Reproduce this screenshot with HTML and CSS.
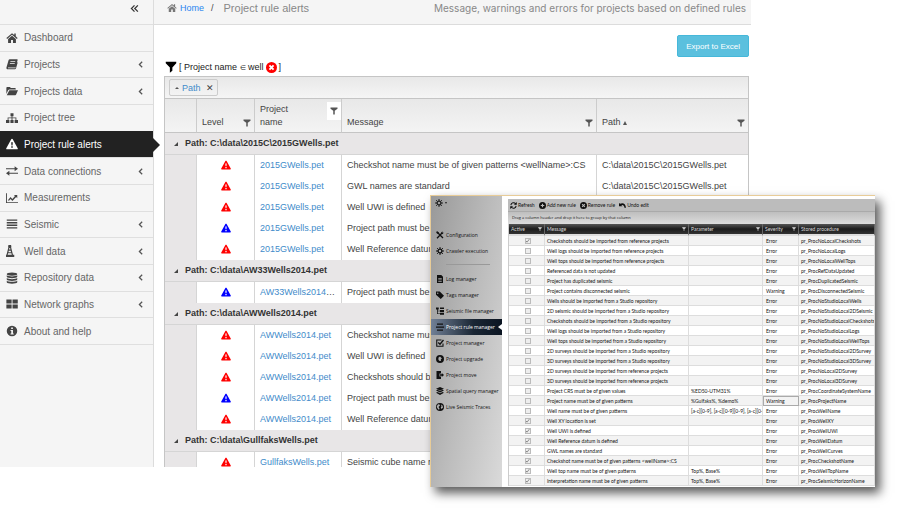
FILE: index.html
```html
<!DOCTYPE html>
<html lang="en">
<head>
    <meta charset="UTF-8">
    <meta name="viewport" content="width=device-width, initial-scale=1.0">
    <title>Project rule alerts</title>
    <link rel="stylesheet" href="styles.css">
</head>
<body>
    <svg class="sprite" aria-hidden="true">
        <symbol id="i-home" viewBox="0 0 16 16"><path d="M8 1.500L.5 8l1 1.200L8 3.700l6.500 5.500 1-1.200L13 5.800V2h-2v2.100z"/><path d="M8 5L2.800 9.300V14.500H6.700V10.500H9.300V14.500H13.200V9.300z"/></symbol>
        <symbol id="i-book" viewBox="0 0 16 16"><path d="M5 1.500h9.500c.8 0 1.200.6 1 1.300L13 11.500c-.2.700-.7 1-1.400 1H3.200c-.8 0-.8 1 0 1h9.200l2.300-8 .9.500-2.300 8c-.2.700-.8 1-1.400 1H2.500C1 15 .2 13.800.6 12.500L3.500 2.700C3.700 2 4.200 1.500 5 1.500zM6 4l-.3 1h6.500l.3-1zM5.300 6.500l-.3 1h6.500l.3-1z" fill-rule="evenodd"/></symbol>
        <symbol id="i-folder" viewBox="0 0 16 16"><path d="M.5 12V3.500c0-.6.400-1 1-1h3.700l1.300 1.500h5.500c.6 0 1 .4 1 1V6H4.500c-.7 0-1.300.4-1.700 1z"/><path d="M4.500 7H16l-2.500 5.700c-.2.500-.7.800-1.200.8H1z"/></symbol>
        <symbol id="i-tree" viewBox="0 0 16 16"><path d="M6 1.500h4v4H8.600v1.800h5.200v3.200H16v4h-4.500v-4h1.200V8.400H8.600v2.100h1.500v4H5.900v-4h1.500V8.400H3.300v2.100h1.200v4H0v-4h2.200V7.300h5.200V5.500H6z"/></symbol>
        <symbol id="i-alert" viewBox="0 0 16 16"><path d="M8 1c.5 0 .8.300 1 .600l6.600 12c.5.900-.1 1.400-.9 1.400H1.300c-.8 0-1.400-.5-.9-1.400l6.600-12c.2-.3.500-.6 1-.6zM6.900 5.500l.4 4.500h1.400l.4-4.500zM7 11v2h2v-2z" fill-rule="evenodd"/></symbol>
        <symbol id="i-exchange" viewBox="0 0 16 16"><path d="M0 4.200h11.500V1.800L16 5l-4.500 3.200V5.800H0zM16 10.200H4.500V7.800L0 11l4.500 3.200v-2.400H16z"/></symbol>
        <symbol id="i-chart" viewBox="0 0 16 16"><path d="M0 1.500h1.200v12H16v1.200H0z"/><path d="M2.500 11L6 6.800l2.500 2.400 3.500-4L10.600 4H15v4.300l-1.500-1.500L8.600 12 6 9.300l-2 2.500z"/></symbol>
        <symbol id="i-bars" viewBox="0 0 16 16"><path d="M1 2h14v1.800H1zM1 5.400h14v1.800H1zM1 8.800h14v1.800H1zM1 12.200h14V14H1z"/></symbol>
        <symbol id="i-derrick" viewBox="0 0 16 16"><path d="M3.200 0h3.600l.4 3H6.800l2.500 10H11v3H-1v-3h1.700L3.200 3h-.4zM4.500 4l-.4 2h1.800l-.4-2zM3.700 7.500L3.300 9.500h3.400L6.300 7.500zM2.800 11l-.5 2h5.400l-.5-2z" fill-rule="evenodd"/></symbol>
        <symbol id="i-db" viewBox="0 0 16 16"><ellipse cx="8" cy="2.800" rx="7" ry="2.300"/><path d="M1 4.400c2 2 12 2 14 0v2c-1 2.600-13 2.600-14 0zM1 8c2 2 12 2 14 0v2c-1 2.600-13 2.600-14 0zM1 11.600c2 2 12 2 14 0v2c-1 2.600-13 2.600-14 0z"/></symbol>
        <symbol id="i-grid" viewBox="0 0 16 16"><path d="M.5 2h7v5.400h-7zM8.700 2h7v5.400h-7zM.5 8.600h7V14h-7zM8.700 8.600h7V14h-7z"/></symbol>
        <symbol id="i-info" viewBox="0 0 16 16"><path d="M8 1a7 7 0 100 14A7 7 0 008 1zM6.900 3.200h2.300v2H6.900zM6 6.500h3.300v4.700h1v1.500H6v-1.500h1V8H6z" fill-rule="evenodd"/></symbol>
        <symbol id="i-left" viewBox="0 0 16 16"><path d="M11 3L6 8l5 5" fill="none" stroke="currentColor" stroke-width="2.200"/></symbol>
        <symbol id="i-dleft" viewBox="0 0 16 16"><path d="M8 2.500L2.500 8 8 13.500M14 2.500L8.500 8l5.500 5.500" fill="none" stroke="currentColor" stroke-width="2.200"/></symbol>
        <symbol id="i-filter" viewBox="0 0 16 16"><path d="M1 1h14v2L9.800 8.500V13L6.500 15.500v-7L1 3z"/></symbol>
        <symbol id="i-funnel" viewBox="0 0 16 16"><path d="M1 1h14v2.500L9.500 7.500V15h-3V7.500L1 3.500z"/></symbol>
        <symbol id="i-close" viewBox="0 0 16 16"><circle cx="8" cy="8" r="8" fill="#f00"/><path d="M5 5l6 6M11 5l-6 6" stroke="#fff" stroke-width="2.800"/></symbol>
        <symbol id="i-gear" viewBox="0 0 16 16"><circle cx="8" cy="8" r="3.800" fill="none" stroke="currentColor" stroke-width="2.600"/><path d="M8 0v4M8 12v4M0 8h4M12 8h4M2.300 2.300l3 3M10.700 10.700l3 3M2.300 13.700l3-3M10.700 5.300l3-3" stroke="currentColor" stroke-width="2"/></symbol>
        <symbol id="i-tools" viewBox="0 0 16 16"><path d="M2 14.500L12 4M3 3l11 11" stroke="currentColor" stroke-width="2.600"/><path d="M.5 1.500L3 .5l3 3L4 6 .8 4.200zM10 3.500L13 .5l-.3 2.500 2.800.3-2.700 3z"/></symbol>
        <symbol id="i-doc" viewBox="0 0 16 16"><path d="M2 0h8.500L14 3.500V16H2zM4.500 6v1.300h7V6zM4.500 9v1.300h7V9zM4.500 12v1.300h7V12z" fill-rule="evenodd"/></symbol>
        <symbol id="i-tag" viewBox="0 0 16 16"><path d="M0 1h7.500L16 9.500 9.500 16 0 7.500zM3.500 3a1.400 1.400 0 100 2.800 1.400 1.400 0 000-2.800z" fill-rule="evenodd"/></symbol>
        <symbol id="i-files" viewBox="0 0 16 16"><path d="M0 1h5.500v4H3.500v2.300H8V6h8v4H8V8.700H3.500v4.100H8V11.500h8v4H8v-1.300H2V5H0zM8 1h8v3H8z"/></symbol>
        <symbol id="i-rules" viewBox="0 0 16 16"><path d="M2 1h12v2.500H2zM0 7h16v2.500H0zM2 13h12v2.500H2z"/></symbol>
        <symbol id="i-check" viewBox="0 0 16 16"><path d="M11 2H1.500v12.500H14V9" fill="none" stroke="currentColor" stroke-width="2.200"/><path d="M4.500 7l3.500 3.500L15 2" fill="none" stroke="currentColor" stroke-width="2.800"/></symbol>
        <symbol id="i-upgrade" viewBox="0 0 16 16"><path d="M8 0a8 8 0 100 16A8 8 0 008 0zM8 3l4.500 4.500H9.800V12A4.600 4.600 0 018 3z" fill-rule="evenodd"/></symbol>
        <symbol id="i-move" viewBox="0 0 16 16"><path d="M1 0h9v5H7v6h3v5H1z"/><path d="M8 6.700h3.500V4L16 8l-4.500 4V9.300H8z"/></symbol>
        <symbol id="i-layers" viewBox="0 0 16 16"><path d="M8 0l8 3.500L8 7 0 3.500zM0 7l3-1.300 5 2.300 5-2.300L16 7l-8 3.800zM0 11.500l3-1.300 5 2.300 5-2.300 3 1.300L8 16z"/></symbol>
        <symbol id="i-globe" viewBox="0 0 16 16"><path d="M8 0a8 8 0 100 16A8 8 0 008 0zM4 2.500l3 .5 1 2-3 3 2 3-1 3-3.500-4-1-3zM10 3l3 2 1 4-3 3-1.500-3L11 7z" fill-rule="evenodd"/></symbol>
        <symbol id="i-refresh" viewBox="0 0 16 16"><path d="M2 7a6 6 0 0111-2.500M14 9A6 6 0 013 11.500" fill="none" stroke="currentColor" stroke-width="2.400"/><path d="M15.500 0v6.500H9zM.5 16V9.500H7z"/></symbol>
        <symbol id="i-plus" viewBox="0 0 16 16"><path d="M8 0a8 8 0 100 16A8 8 0 008 0zM6.700 4h2.600v2.700H12v2.600H9.300V12H6.700V9.300H4V6.700h2.700z" fill-rule="evenodd"/></symbol>
        <symbol id="i-remove" viewBox="0 0 16 16"><path d="M8 0a8 8 0 100 16A8 8 0 008 0zM5.500 4L8 6.300 10.500 4 12 5.500 9.700 8l2.300 2.500-1.500 1.500L8 9.700 5.500 12 4 10.500 6.300 8 4 5.500z" fill-rule="evenodd"/></symbol>
        <symbol id="i-undo" viewBox="0 0 16 16"><path d="M0 2l2.500 2.200C8 .5 15 3 16 13h-3.500C12 8 9 6 5.500 7.200L8 9.500H0z"/></symbol>
    </svg>

    <div class="app">
        <aside class="sidebar">
            <button class="collapse" type="button" aria-label="Collapse menu"><svg class="icon"><use href="#i-dleft"/></svg></button>
            <nav class="menu">
                <a href="#"><svg class="icon"><use href="#i-home"/></svg>Dashboard</a>
                <a href="#"><svg class="icon"><use href="#i-book"/></svg>Projects<svg class="arrow"><use href="#i-left"/></svg></a>
                <a href="#"><svg class="icon"><use href="#i-folder"/></svg>Projects data<svg class="arrow"><use href="#i-left"/></svg></a>
                <a href="#"><svg class="icon"><use href="#i-tree"/></svg>Project tree</a>
                <a href="#" class="active"><svg class="icon"><use href="#i-alert"/></svg>Project rule alerts</a>
                <a href="#"><svg class="icon"><use href="#i-exchange"/></svg>Data connections<svg class="arrow"><use href="#i-left"/></svg></a>
                <a href="#"><svg class="icon"><use href="#i-chart"/></svg>Measurements</a>
                <a href="#"><svg class="icon"><use href="#i-bars"/></svg>Seismic<svg class="arrow"><use href="#i-left"/></svg></a>
                <a href="#"><svg class="icon"><use href="#i-derrick"/></svg>Well data<svg class="arrow"><use href="#i-left"/></svg></a>
                <a href="#"><svg class="icon"><use href="#i-db"/></svg>Repository data<svg class="arrow"><use href="#i-left"/></svg></a>
                <a href="#"><svg class="icon"><use href="#i-grid"/></svg>Network graphs<svg class="arrow"><use href="#i-left"/></svg></a>
                <a href="#"><svg class="icon"><use href="#i-info"/></svg>About and help</a>
            </nav>
        </aside>

        <main class="main">
            <header class="topbar">
                <svg class="icon"><use href="#i-home"/></svg>
                <a href="#">Home</a>
                <span class="slash">/</span>
                <h1>Project rule alerts</h1>
                <p>Message, warnings and errors for projects based on defined rules</p>
            </header>

            <div class="content">
                <button class="export" type="button">Export to Excel</button>
                <div class="filter-line">
                    <svg class="icon"><use href="#i-filter"/></svg>
                    <span>[ Project name <small>&isin;</small> well</span>
                    <button type="button" aria-label="Clear filter"><svg class="icon"><use href="#i-close"/></svg></button>
                    <span>]</span>
                </div>

                <div class="grid">
                    <div class="group-bar">
                        <span class="chip"><i class="up"></i><a href="#">Path</a><button type="button" aria-label="Remove grouping">&#10005;</button></span>
                    </div>
                    <table class="alerts">
                        <colgroup>
                            <col class="c-indent"><col class="c-level"><col class="c-name"><col class="c-message"><col class="c-path">
                        </colgroup>
                        <thead>
                            <tr>
                                <th></th>
                                <th><div class="head">Level<svg class="funnel"><use href="#i-funnel"/></svg></div></th>
                                <th><div class="head head-top">Project<br>name<span class="funnel-box"><svg class="funnel"><use href="#i-funnel"/></svg></span></div></th>
                                <th><div class="head">Message<svg class="funnel"><use href="#i-funnel"/></svg></div></th>
                                <th><div class="head"><span>Path <i class="sort"></i></span><svg class="funnel"><use href="#i-funnel"/></svg></div></th>
                            </tr>
                        </thead>
                        <tbody id="alerts"></tbody>
                    </table>
                </div>
            </div>
        </main>
    </div>

    <section class="manager">
        <aside class="manager-side">
            <button class="settings" type="button" aria-label="Settings"><svg class="icon"><use href="#i-gear"/></svg><i></i></button>
            <nav>
                <a href="#"><svg class="icon"><use href="#i-tools"/></svg>Configuration</a>
                <a href="#"><svg class="icon"><use href="#i-gear"/></svg>Crawler execution</a>
                <hr>
                <a href="#"><svg class="icon"><use href="#i-doc"/></svg>Log manager</a>
                <a href="#"><svg class="icon"><use href="#i-tag"/></svg>Tags manager</a>
                <a href="#"><svg class="icon"><use href="#i-files"/></svg>Seismic file manager</a>
                <a href="#" class="active"><svg class="icon"><use href="#i-rules"/></svg>Project rule manager</a>
                <a href="#"><svg class="icon"><use href="#i-check"/></svg>Project manager</a>
                <a href="#"><svg class="icon"><use href="#i-upgrade"/></svg>Project upgrade</a>
                <a href="#"><svg class="icon"><use href="#i-move"/></svg>Project move</a>
                <a href="#"><svg class="icon"><use href="#i-layers"/></svg>Spatial query manager</a>
                <a href="#"><svg class="icon"><use href="#i-globe"/></svg>Live Seismic Traces</a>
            </nav>
        </aside>
        <div class="manager-main">
            <div class="toolbar">
                <button type="button"><svg class="icon"><use href="#i-refresh"/></svg>Refresh</button>
                <button type="button"><svg class="icon"><use href="#i-plus"/></svg>Add new rule</button>
                <button type="button"><svg class="icon"><use href="#i-remove"/></svg>Remove rule</button>
                <button type="button"><svg class="icon"><use href="#i-undo"/></svg>Undo edit</button>
            </div>
            <div class="drag-hint">Drag a column header and drop it here to group by that column</div>
            <table class="rules">
                <colgroup>
                    <col class="r-active"><col class="r-message"><col class="r-param"><col class="r-severity"><col class="r-proc">
                </colgroup>
                <thead>
                    <tr>
                        <th><div>Active<svg><use href="#i-funnel"/></svg></div></th>
                        <th><div>Message<svg><use href="#i-funnel"/></svg></div></th>
                        <th><div>Parameter<svg><use href="#i-funnel"/></svg></div></th>
                        <th><div>Severity<svg><use href="#i-funnel"/></svg></div></th>
                        <th><div>Stored procedure</div></th>
                    </tr>
                </thead>
                <tbody id="rules"></tbody>
            </table>
        </div>
    </section>

    <script src="script.js"></script>
</body>
</html>
```
FILE: styles.css
```css
* {
    margin: 0;
    padding: 0;
    box-sizing: border-box;
}

body {
    position: relative;
    min-height: 508px;
    background: #fff;
    font-family: "Liberation Sans", Arial, sans-serif;
    font-size: 9px;
    color: #444;
}

a {
    color: inherit;
    text-decoration: none;
}

button {
    border: none;
    background: none;
    font: inherit;
    color: inherit;
    cursor: pointer;
}

svg {
    fill: currentColor;
    flex: none;
}

.sprite {
    position: absolute;
    width: 0;
    height: 0;
}

.icon {
    width: 12px;
    height: 12px;
}

/* web application */
.app {
    display: flex;
    height: 467px;
    margin-right: 153px;
    overflow: hidden;
}

.sidebar {
    width: 154px;
    flex: none;
    background: #f5f5f5;
    border-right: 1px solid #dcdcdc;
}

.collapse {
    display: flex;
    align-items: center;
    justify-content: flex-end;
    width: 100%;
    height: 24px;
    padding: 0 14px 8px 0;
    color: #333;
}

.collapse .icon {
    width: 9px;
    height: 9px;
}

.menu {
    display: grid;
    grid-template-rows: repeat(12, 1fr);
    height: 321px;
    border-bottom: 1px solid #dfdfdf;
}

.menu a {
    position: relative;
    display: flex;
    align-items: center;
    gap: 6px;
    padding: 0 8px 0 6px;
    border-top: 1px solid #dfdfdf;
    font-size: 10px;
    color: #666;
}

.menu .icon {
    color: #444;
}

.menu .arrow {
    width: 9px;
    height: 9px;
    margin-left: auto;
    color: #555;
}

.menu .active {
    background: #222;
    border-color: #222;
    color: #fff;
}

.menu .active .icon {
    color: #fff;
}

.menu .active::after {
    content: "";
    position: absolute;
    left: 100%;
    top: 6px;
    border: 7px solid transparent;
    border-left-color: #222;
    border-right: 0;
}

.main {
    flex: 1;
    min-width: 0;
}

.topbar {
    display: flex;
    align-items: center;
    height: 25px;
    padding: 0 5px 9px 13px;
    background: #f5f5f5;
    border-bottom: 1px solid #dcdcdc;
}

.topbar .icon {
    width: 10px;
    height: 10px;
    margin-right: 3px;
    color: #777;
}

.topbar a {
    color: #2a85f0;
}

.slash {
    margin: 0 10px 0 7px;
}

.topbar h1,
.topbar p {
    font-size: 11px;
    font-weight: normal;
    color: #888;
    white-space: nowrap;
}

.topbar p {
    margin-left: auto;
    font-family: Inter, sans-serif;
    font-size: 10px;
}

.content {
    display: flex;
    flex-direction: column;
    padding: 10px 2px 0 10px;
}

.export {
    align-self: flex-end;
    height: 22px;
    padding: 0 8px;
    background: #5bc0de;
    border: 1px solid #46b8da;
    border-radius: 2px;
    font-size: 8px;
    color: #fff;
}

.filter-line {
    display: flex;
    align-items: center;
    gap: 2px;
    height: 14px;
    margin: 3px 0 2px 1px;
    color: #222;
}

.filter-line small {
    font-size: 7px;
}

.filter-line > .icon {
    color: #000;
}

.filter-line button,
.filter-line button .icon {
    display: block;
    width: 11px;
    height: 11px;
}

.grid {
    border: 1px solid #c5c5c5;
}

.group-bar {
    height: 22px;
    padding: 2px 4px;
    background: linear-gradient(#e8e8e8, #f5f5f5);
    border-bottom: 1px solid #c5c5c5;
}

.chip {
    display: inline-flex;
    align-items: center;
    height: 17px;
    padding: 0 3px 0 5px;
    border: 1px solid #ccc;
    border-radius: 2px;
}

.chip a {
    margin: 0 5px 0 3px;
    color: #428bca;
}

.up,
.sort {
    display: inline-block;
    border: 2px solid transparent;
    border-top: 0;
    border-bottom-color: #555;
}

.sort {
    border-width: 0 2px 4px;
}

.alerts {
    width: 100%;
    table-layout: fixed;
    border-collapse: separate;
    border-spacing: 0;
}

.c-indent { width: 32px; }
.c-level { width: 58px; }
.c-name { width: 87px; }
.c-path { width: 151px; }

.alerts thead {
    background: linear-gradient(#e8e8e8, #f4f4f4);
}

.alerts th {
    height: 34px;
    padding: 3px 3px 3px 5px;
    border-right: 1px solid #ccc;
    border-bottom: 1px solid #c5c5c5;
    font-weight: normal;
    text-align: left;
    vertical-align: bottom;
}

.alerts th:last-child {
    border-right: none;
}

.head {
    display: flex;
    justify-content: space-between;
    align-items: flex-end;
    line-height: 13px;
}

.head-top {
    position: relative;
    display: block;
}

.funnel {
    width: 8px;
    height: 8px;
    margin-bottom: 2px;
    color: #555;
}

.funnel-box {
    position: absolute;
    top: -1px;
    right: -3px;
    display: grid;
    place-items: center;
    width: 14px;
    height: 18px;
    background: #fff;
}

.funnel-box .funnel {
    margin: 0;
}

.alerts td {
    height: 21px;
    padding: 0 5px 1px;
    border-right: 1px solid #d5d5d5;
    overflow: hidden;
    text-overflow: ellipsis;
    white-space: nowrap;
}

.alerts td:last-child {
    border-right: none;
}

.alerts .indent,
.alerts .group td {
    background: #e8e6e7;
}

.alerts .group td {
    height: 22px;
    padding-left: 9px;
    border-bottom: 1px solid #d5d5d5;
    font-weight: bold;
    color: #333;
}

.expander {
    display: inline-block;
    margin-right: 7px;
    border-left: 4px solid transparent;
    border-bottom: 4px solid #444;
}

.alerts .level {
    text-align: center;
}

.level svg {
    display: block;
    width: 10px;
    height: 10px;
    margin: 0 auto;
}

.error {
    color: #f00;
}

.info {
    color: #00f;
}

.alerts a {
    color: #428bca;
}

/* desktop rule manager, floats over the application */
.manager {
    position: absolute;
    top: 195px;
    left: 430px;
    right: 29px;
    display: flex;
    height: 292px;
    background: #fff;
    border: 1px solid #e8cc98;
    border-width: 1px 0 0 1px;
    box-shadow: 5px 6px 10px rgba(0, 0, 0, 0.65);
    font-family: Lato, "Open Sans", sans-serif;
    font-size: 5px;
    line-height: 6px;
    color: #111;
}

.manager .icon {
    width: 8px;
    height: 8px;
}

.manager-side {
    width: 71px;
    flex: none;
    background: linear-gradient(100deg, #999, #bbb 50%, #dadada);
    font-family: "Open Sans", sans-serif;
}

.settings {
    display: flex;
    align-items: center;
    gap: 2px;
    height: 13px;
    padding-left: 4px;
    color: #222;
}

.settings i {
    border: 2px solid transparent;
    border-width: 2px 1px 0;
    border-top-color: #222;
}

.manager-side nav {
    padding-top: 18px;
}

.manager-side nav a {
    position: relative;
    display: flex;
    align-items: center;
    gap: 2px;
    height: 16px;
    padding-left: 5px;
    white-space: nowrap;
}

.manager-side hr {
    height: 1px;
    margin: 5px 12px 6px 15px;
    border: none;
    background: #999;
}

.manager-side .active {
    background: linear-gradient(90deg, #718096, #1a2634 60%, #0b1522);
    color: #fff;
}

.manager-side .active .icon {
    color: #111;
}

.manager-side .active::after {
    content: "";
    position: absolute;
    right: 0;
    top: 5px;
    border: 3px solid transparent;
    border-right: 4px solid #fff;
    border-left: 0;
}

.manager-main {
    flex: 1;
    min-width: 0;
    margin: 3px 0 0 6px;
}

.toolbar {
    display: flex;
    align-items: center;
    gap: 4px;
    height: 13px;
    padding-left: 2px;
    background: #bcbcbc;
    border-bottom: 1px solid #aaa;
}

.toolbar button {
    display: flex;
    align-items: center;
    gap: 1px;
}

.toolbar .icon {
    width: 7px;
    height: 7px;
}

.drag-hint {
    height: 12px;
    padding-left: 4px;
    background: linear-gradient(#bebebe, #dcdcdc);
    font-family: "Open Sans", sans-serif;
    font-size: 4px;
    line-height: 12px;
}

.rules {
    width: 100%;
    table-layout: fixed;
    border-collapse: separate;
    border-spacing: 0;
    border-left: 1px solid #ccc;
}

.r-active { width: 36px; }
.r-param { width: 74px; }
.r-severity { width: 36px; }
.r-proc { width: 76px; }

.rules th {
    height: 12px;
    padding: 0 2px;
    background: linear-gradient(#555, #1c1c1c 50%, #333) padding-box;
    border-right: 1px solid #666;
    border-bottom: 2px solid #ddd;
    font-weight: normal;
    color: #ddd;
    text-align: left;
}

.rules th div {
    display: flex;
    align-items: center;
    justify-content: space-between;
}

.rules th svg {
    width: 4px;
    height: 4px;
}

.rules td {
    height: 10px;
    padding: 0 0 0 2px;
    border-right: 1px solid #ddd;
    border-bottom: 1px solid #ddd;
    overflow: hidden;
    white-space: nowrap;
}

.rules tr:nth-child(odd) td {
    background: #f3f3f3;
}

.rules td.severity {
    padding-left: 3px;
}

.rules .current td {
    background: #ebebeb;
}

.rules .current .severity {
    outline: 1px solid #aaa;
    outline-offset: -1px;
}

.rules input {
    display: block;
    width: 6px;
    height: 6px;
    margin: 0 auto;
    appearance: none;
    background: #eee;
    border: 1px solid #bbb;
}

.rules input:checked::before {
    content: "";
    display: block;
    width: 4px;
    height: 4px;
    background: #777;
    clip-path: polygon(0 50%, 40% 75%, 100% 0, 100% 25%, 40% 100%, 0 75%);
}
```
FILE: script.js
```js
const alertGroups = [
    {
        path: 'C:\\data\\2015C\\2015GWells.pet',
        project: '2015GWells.pet',
        alerts: [
            ['error', 'Checkshot name must be of given patterns <wellName>:CS'],
            ['error', 'GWL names are standard'],
            ['error', 'Well UWI is defined'],
            ['info', 'Project path must be of given patterns'],
            ['error', 'Well Reference datum is defined']
        ]
    },
    {
        path: 'C:\\data\\AW33Wells2014.pet',
        project: 'AW33Wells2014.pet',
        alerts: [['info', 'Project path must be of given patterns']]
    },
    {
        path: 'C:\\data\\AWWells2014.pet',
        project: 'AWWells2014.pet',
        alerts: [
            ['error', 'Checkshot name must be of given patterns'],
            ['error', 'Well UWI is defined'],
            ['error', 'Checkshots should be imported'],
            ['info', 'Project path must be of given patterns'],
            ['error', 'Well Reference datum is defined']
        ]
    },
    {
        path: 'C:\\data\\GullfaksWells.pet',
        project: 'GullfaksWells.pet',
        alerts: [['error', 'Seismic cube name must be of given patterns']]
    }
];

// active, message, parameter, severity, stored procedure
const rules = [
    [1, 'Checkshots should be imported from reference projects', '', 'Error', 'pr_ProcNoLocalCheckshots'],
    [0, 'Well logs should be imported from reference projects', '', 'Error', 'pr_ProcNoLocalLogs'],
    [0, 'Well tops should be imported from reference projects', '', 'Error', 'pr_ProcNoLocalWellTops'],
    [0, 'Referenced data is not updated', '', 'Error', 'pr_ProcRefDataUpdated'],
    [0, 'Project has duplicated seismic', '', 'Error', 'pr_ProcDuplicatedSeismic'],
    [0, 'Project contains disconnected seismic', '', 'Warning', 'pr_ProcDisconnectedSeismic'],
    [0, 'Wells should be imported from a Studio repository', '', 'Error', 'pr_ProcNoStudioLocalWells'],
    [0, '2D seismic should be imported from a Studio repository', '', 'Error', 'pr_ProcNoStudioLocal2DSeismic'],
    [0, 'Checkshots should be imported from a Studio repository', '', 'Error', 'pr_ProcNoStudioLocalCheckshots'],
    [0, 'Well logs should be imported from a Studio repository', '', 'Error', 'pr_ProcNoStudioLocalLogs'],
    [0, 'Well tops should be imported from a Studio repository', '', 'Error', 'pr_ProcNoStudioLocalWellTops'],
    [0, '2D surveys should be imported from a Studio repository', '', 'Error', 'pr_ProcNoStudioLocal2DSurvey'],
    [0, '3D surveys should be imported from a Studio repository', '', 'Error', 'pr_ProcNoStudioLocal3DSurvey'],
    [0, '2D surveys should be imported from reference projects', '', 'Error', 'pr_ProcNoLocal2DSurvey'],
    [0, '3D surveys should be imported from reference projects', '', 'Error', 'pr_ProcNoLocal3DSurvey'],
    [0, 'Project CRS must be of given values', '%ED50-UTM31%', 'Error', 'pr_ProcCoordinateSystemName'],
    [0, 'Project name must be of given patterns', '%Gulfaks%, %demo%', 'Warning', 'pr_ProcProjectName'],
    [0, 'Well name must be of given patterns', '[a-c][0-9], [a-c][0-9][0-9], [a-c][0-9', 'Error', 'pr_ProcWellName'],
    [1, 'Well XY location is set', '', 'Error', 'pr_ProcWellXY'],
    [1, 'Well UWI is defined', '', 'Error', 'pr_ProcWellUWI'],
    [1, 'Well Reference datum is defined', '', 'Error', 'pr_ProcWellDatum'],
    [1, 'GWL names are standard', '', 'Error', 'pr_ProcWellCurves'],
    [1, 'Checkshot name must be of given patterns <wellName>:CS', '', 'Error', 'pr_ProcCheckshotName'],
    [1, 'Well top name must be of given patterns', 'Top%, Base%', 'Error', 'pr_ProcWellTopName'],
    [1, 'Interpretation name must be of given patterns', 'Top%, Base%', 'Error', 'pr_ProcSeismicHorizonName']
];

const escapeHtml = text => text.replace(/</g, '&lt;').replace(/>/g, '&gt;');

document.getElementById('alerts').innerHTML = alertGroups.map(group => `
    <tr class="group"><td colspan="5"><i class="expander"></i>Path: ${group.path}</td></tr>
    ${group.alerts.map(([level, message]) => `
    <tr>
        <td class="indent"></td>
        <td class="level ${level}"><svg><use href="#i-alert"/></svg></td>
        <td><a href="#">${group.project}</a></td>
        <td>${escapeHtml(message)}</td>
        <td>${group.path}</td>
    </tr>`).join('')}`).join('');

document.getElementById('rules').innerHTML = rules.map(([active, message, param, severity, proc]) => `
    <tr${proc === 'pr_ProcProjectName' ? ' class="current"' : ''}>
        <td><input type="checkbox" aria-label="Active" ${active ? 'checked' : ''}></td>
        <td>${escapeHtml(message)}</td>
        <td>${param}</td>
        <td class="severity">${severity}</td>
        <td>${proc}</td>
    </tr>`).join('');
```
